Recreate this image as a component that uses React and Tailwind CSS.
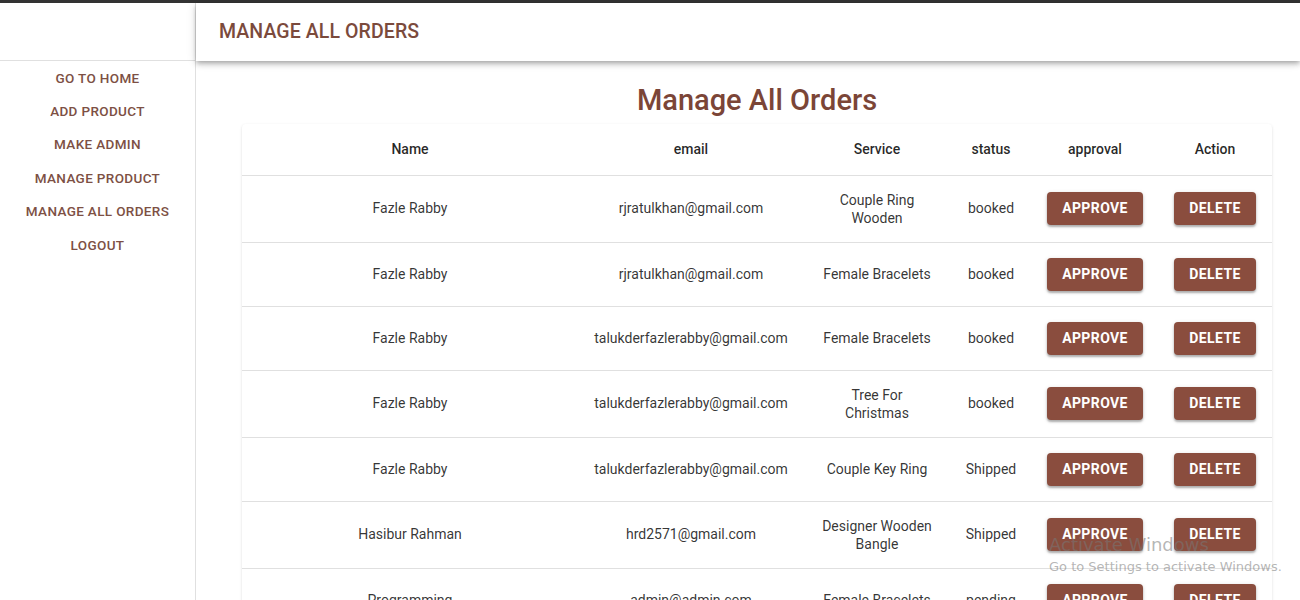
import React from 'react';

const navItems = ['Go To Home', 'Add Product', 'Make Admin', 'Manage Product', 'Manage All Orders', 'Logout'];

const orders = [
  { name: 'Fazle Rabby', email: 'rjratulkhan@gmail.com', service: 'Couple Ring Wooden', status: 'booked' },
  { name: 'Fazle Rabby', email: 'rjratulkhan@gmail.com', service: 'Female Bracelets', status: 'booked' },
  { name: 'Fazle Rabby', email: 'talukderfazlerabby@gmail.com', service: 'Female Bracelets', status: 'booked' },
  { name: 'Fazle Rabby', email: 'talukderfazlerabby@gmail.com', service: 'Tree For Christmas', status: 'booked' },
  { name: 'Fazle Rabby', email: 'talukderfazlerabby@gmail.com', service: 'Couple Key Ring', status: 'Shipped' },
  { name: 'Hasibur Rahman', email: 'hrd2571@gmail.com', service: 'Designer Wooden Bangle', status: 'Shipped' },
  { name: 'Programming', email: 'admin@admin.com', service: 'Female Bracelets', status: 'pending' },
];

function BrownButton({ children }) {
  return (
    <button className="h-[33px] px-[15px] rounded-[4px] bg-[#8a4d3e] text-white text-[14px] font-bold uppercase tracking-[0.4px] shadow-[0_2px_2px_rgba(0,0,0,0.25),0_1px_4px_rgba(0,0,0,0.15)]">
      {children}
    </button>
  );
}

export default function App() {
  return (
    <div className="relative min-h-screen bg-white text-[rgba(0,0,0,0.8)] font-['Roboto',_'Liberation_Sans',_sans-serif]">
      {/* barra oscura de arriba */}
      <div className="h-[3px] bg-[#333333]" />

      <div className="flex">
        {/* sidebar */}
        <aside className="w-[196px] shrink-0 border-r border-[#e0e0e0] min-h-[600px]">
          <div className="h-[58px] border-b border-[#e0e0e0]" />
          <nav className="flex flex-col">
            {navItems.map((item) => (
              <a
                key={item}
                className="h-[33.4px] flex items-center justify-center text-[13.5px] font-medium uppercase tracking-[0.35px] text-[#7d5044]"
              >
                {item}
              </a>
            ))}
          </nav>
        </aside>

        <div className="flex-1 min-w-0">
          {/* header */}
          <header className="relative z-10 h-[58px] flex items-center pl-[23px] bg-white shadow-[0_2px_4px_-1px_rgba(0,0,0,0.2),0_4px_5px_0_rgba(0,0,0,0.14),0_1px_10px_0_rgba(0,0,0,0.12)]">
            <h1 className="text-[19.5px] font-medium uppercase tracking-[0.1px] text-[#7b4a3c]">Manage All Orders</h1>
          </header>

          <main className="pl-[46px] pr-[28px] pt-[22px]">
            <h2 className="text-center text-[29px] font-medium leading-[34px] text-[#7b4537] mb-[7px]">Manage All Orders</h2>

            <div className="bg-white rounded-[4px] shadow-[0_1px_3px_rgba(0,0,0,0.12),0_1px_1px_rgba(0,0,0,0.06)]">
              <table className="w-full table-fixed border-collapse text-[14px]">
                <colgroup>
                  <col className="w-[336px]" />
                  <col className="w-[226px]" />
                  <col className="w-[146px]" />
                  <col className="w-[82px]" />
                  <col className="w-[126px]" />
                  <col className="w-[114px]" />
                </colgroup>
                <thead>
                  <tr className="h-[51px] border-b border-[#e0e0e0]">
                    {['Name', 'email', 'Service', 'status', 'approval', 'Action'].map((h) => (
                      <th key={h} className="px-2 text-center font-medium text-[14px] text-[rgba(0,0,0,0.85)]">
                        {h}
                      </th>
                    ))}
                  </tr>
                </thead>
                <tbody>
                  {orders.map((o, i) => (
                    <tr key={i} className="border-b border-[#e0e0e0]">
                      <td className="px-2 py-[15px] text-center">{o.name}</td>
                      <td className="px-2 py-[15px] text-center">{o.email}</td>
                      <td className="px-4 py-[15px] text-center leading-[18px]">{o.service}</td>
                      <td className="px-2 py-[15px] text-center">{o.status}</td>
                      <td className="px-2 py-[15px] text-center">
                        <BrownButton>Approve</BrownButton>
                      </td>
                      <td className="px-2 py-[15px] text-center">
                        <BrownButton>Delete</BrownButton>
                      </td>
                    </tr>
                  ))}
                </tbody>
              </table>
            </div>
          </main>
        </div>
      </div>

      {/* marca de agua de windows */}
      <div className="pointer-events-none absolute left-[1049px] top-[534px] text-[rgba(120,120,120,0.55)] font-['DejaVu_Sans',_sans-serif]">
        <div className="text-[18px] leading-[22px]">Activate Windows</div>
        <div className="text-[13px] leading-[18px] mt-[2px]">Go to Settings to activate Windows.</div>
      </div>
    </div>
  );
}
